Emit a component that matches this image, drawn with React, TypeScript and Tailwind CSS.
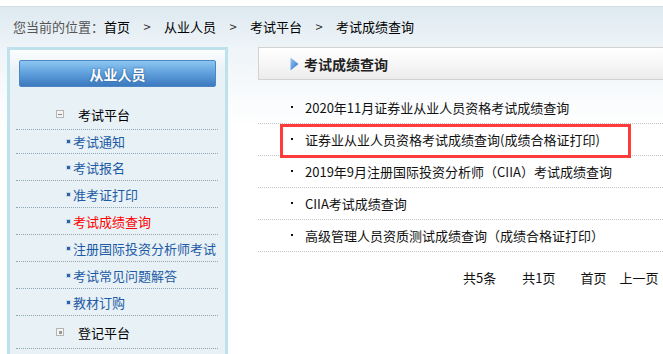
export default function App() {
  const items = ['考试通知', '考试报名', '准考证打印', '考试成绩查询', '注册国际投资分析师考试', '考试常见问题解答', '教材订购'];
  const results = [
    '2020年11月证券业从业人员资格考试成绩查询',
    '证券业从业人员资格考试成绩查询(成绩合格证打印)',
    '2019年9月注册国际投资分析师（CIIA）考试成绩查询',
    'CIIA考试成绩查询',
    '高级管理人员资质测试成绩查询（成绩合格证打印）',
  ];

  return (
    <div className="w-[663px] h-[354px] overflow-hidden bg-white font-['Noto_Sans_CJK_SC','Noto_Sans',sans-serif] text-[13px] leading-none">
      <div className="h-[6px] bg-white" />
      <div className="border-t border-[#d6dee3] bg-[linear-gradient(#dde9f0,#eef4f8_40px,#ffffff_120px)]">
        {/* breadcrumb */}
        <div className="h-[40px] pl-[13px] pb-[2px] flex items-center whitespace-nowrap text-black">
          <span className="text-[#555]">您当前的位置：</span>
          <span>首页</span>
          <span className="w-[34px] text-center text-[#333]">&gt;</span>
          <span>从业人员</span>
          <span className="w-[34px] text-center text-[#333]">&gt;</span>
          <span>考试平台</span>
          <span className="w-[34px] text-center text-[#333]">&gt;</span>
          <span>考试成绩查询</span>
        </div>

        <div className="flex pl-[7px]">
          {/* left nav */}
          <div className="w-[221px] h-[320px] shrink-0 border-[3px] border-[#bfe1eb] bg-[linear-gradient(#fbfdfe,#e8f1f5_22px)] pt-[10px]">
            <div className="mx-[9px] h-[27px] rounded-[2px] border border-[#4d86c2] bg-[linear-gradient(#8dc6f2,#5e9fdc_50%,#3c79bf)] flex items-center justify-center text-white font-bold text-[14px] [text-shadow:0_0_2px_#1d4f86]">
              从业人员
            </div>
            <div className="mt-[12px] ml-[6px] mr-[7px]">
              <div className="h-[31px] border-b border-dotted border-[#8fa6b4] flex items-center pl-[40px]">
                <span className="w-[8px] h-[8px] border border-[#b5b5b5] bg-[#f4f4f4] flex items-center justify-center">
                  <span className="w-[4px] h-px bg-[#888]" />
                </span>
                <span className="ml-[14px] text-black">考试平台</span>
              </div>
              {items.map((t, i) => (
                <div
                  key={t}
                  className={
                    'border-b border-dotted border-[#8fa6b4] flex items-center pl-[51px] ' +
                    (i === 0 ? 'h-[24px]' : 'h-[27px]')
                  }
                >
                  <span className="w-[3px] h-[3px] bg-[#2c63a8] shadow-[0_0_0_1px_#c6d8ea]" />
                  <span className={'ml-[3px] ' + (i === 3 ? 'text-[#ff0000]' : 'text-[#1d5ba6]')}>{t}</span>
                </div>
              ))}
              <div className="h-[33px] border-b border-dotted border-[#8fa6b4] flex items-center pl-[40px]">
                <span className="w-[8px] h-[8px] border border-[#b5b5b5] bg-[#f4f4f4] flex items-center justify-center">
                  <span className="w-[3px] h-[3px] bg-[#999]" />
                </span>
                <span className="ml-[14px] text-black">登记平台</span>
              </div>
            </div>
          </div>

          {/* right content */}
          <div className="relative ml-[30px] flex-1">
            <div className="h-[33px] border border-r-0 border-[#d2d2d2] bg-[linear-gradient(#ffffff,#f7f7f7_50%,#ececec)] flex items-center pl-[31px]">
              <svg width="9" height="14" viewBox="0 0 9 14" className="shrink-0">
                <defs>
                  <linearGradient id="tri" x1="0" y1="0" x2="1" y2="1">
                    <stop offset="0" stopColor="#9cc8f4" />
                    <stop offset="1" stopColor="#2f6fc6" />
                  </linearGradient>
                </defs>
                <path d="M0.5 0.5 L8.5 7 L0.5 13.5 Z" fill="url(#tri)" />
              </svg>
              <span className="ml-[5px] font-bold text-[14px] text-[#222]">考试成绩查询</span>
            </div>

            <div className="mt-[12px]">
              {results.map((r) => (
                <div key={r} className="h-[32px] border-b border-dotted border-[#c4c4c4] flex items-center pl-[33px] pb-[1px] whitespace-nowrap text-[#111]">
                  <span className="w-[2px] h-[2px] bg-[#111]" />
                  <span className="ml-[12px]">{r}</span>
                </div>
              ))}
            </div>

            <div className="mt-[13px] h-[24px] flex items-center pl-[205px] whitespace-nowrap text-[#111]">
              <span>共5条</span>
              <span className="ml-[26px]">共1页</span>
              <span className="ml-[25px]">首页</span>
              <span className="ml-[13px]">上一页</span>
            </div>

            {/* annotation box */}
            <div className="absolute left-[22px] top-[77px] w-[351px] h-[34px] border-[3px] border-[#ff3b3b]" />
          </div>
        </div>
      </div>
    </div>
  );
}
